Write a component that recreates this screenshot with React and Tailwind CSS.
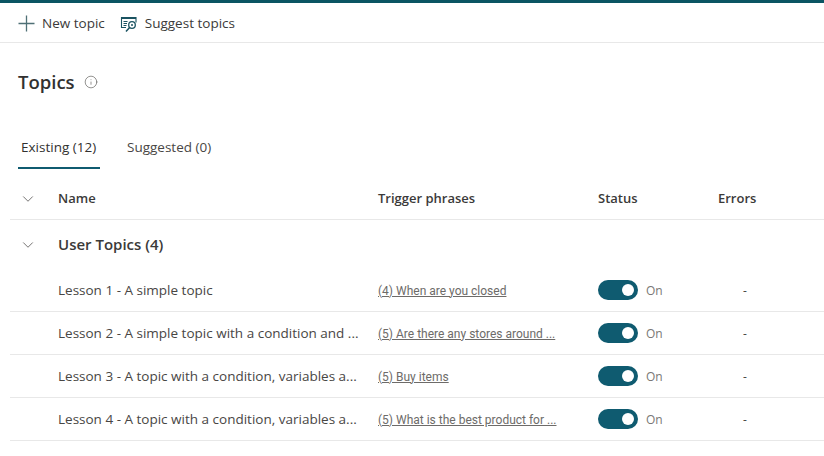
import { ChevronDown, Info } from "lucide-react";

const rows = [
  { name: "Lesson 1 - A simple topic", phrase: "(4) When are you closed" },
  { name: "Lesson 2 - A simple topic with a condition and ...", phrase: "(5) Are there any stores around ..." },
  { name: "Lesson 3 - A topic with a condition, variables a...", phrase: "(5) Buy items" },
  { name: "Lesson 4 - A topic with a condition, variables a...", phrase: "(5) What is the best product for ..." },
];

const PlusIcon = () => (
  <svg width="17" height="17" viewBox="0 0 17 17" fill="none" stroke="#4f7076" strokeWidth="1.3">
    <path d="M8.5 0.5v16M0.5 8.5h16" />
  </svg>
);

const SuggestIcon = () => (
  <svg width="18" height="18" viewBox="0 0 18 18" fill="none" stroke="#1a5361" strokeWidth="1.1">
    <path d="M6 12.500h-4.500v-10h14.500v5" />
    <path d="M1.500 3h14.500" strokeWidth="2" />
    <path d="M3.500 6.500h4M3.500 8.500h3.500M3.500 10.500h3" />
    <circle cx="12" cy="10" r="3.300" strokeWidth="1.300" />
    <circle cx="12" cy="10" r="1" fill="#1a5361" stroke="none" />
    <path d="M9.600 12.500l-3.600 4" strokeWidth="1.500" />
  </svg>
);

const Toggle = () => (
  <div className="flex items-center gap-2">
    <div className="w-10 h-5 rounded-full bg-[#0f5b70] flex items-center justify-end pr-[4px]">
      <div className="w-3 h-3 rounded-full bg-white" />
    </div>
    <span className="text-xs text-[#797775] pt-[1px]">On</span>
  </div>
);

export default function App() {
  return (
    <div className="w-[824px] h-[456px] bg-white overflow-hidden text-[#323130] font-['Open_Sans',sans-serif]">
      <div className="h-[3px] bg-[#0b5563]" />

      <div className="h-[40px] border-b border-[#e8e8e8] flex items-center pl-[18px] pt-[2px] text-[13.5px] text-[#3b3a39]">
        <PlusIcon />
        <span className="ml-[7px]">New topic</span>
        <span className="ml-[15px]"><SuggestIcon /></span>
        <span className="ml-[7px]">Suggest topics</span>
      </div>

      <div className="flex items-center pl-[18px] mt-[24px] h-[30px]">
        <h1 className="text-[18.5px] font-semibold">Topics</h1>
        <Info size={14} strokeWidth={1} className="ml-[9px] text-[#484644]" />
      </div>

      <div className="flex mt-[37px] pl-[18px] text-[13.5px] h-[35px]">
        <div className="w-[82px] pl-[3px] pt-[3px] border-b-2 border-[#0f5b70] font-medium">Existing (12)</div>
        <div className="ml-[27px] pt-[3px] text-[#484644]">Suggested (0)</div>
      </div>

      <div className="ml-[10px]">
        <div className="grid grid-cols-[48px_320px_220px_120px_1fr] items-center h-[51px] pt-[9px] border-b border-[#e8e8e8] text-[13px] font-semibold text-[#3b3a39]">
          <ChevronDown size={18} strokeWidth={1} className="ml-[9px] text-[#484644]" />
          <span>Name</span>
          <span>Trigger phrases</span>
          <span>Status</span>
          <span>Errors</span>
        </div>

        <div className="grid grid-cols-[48px_1fr] items-center h-[49px] text-[15px] font-semibold text-[#3b3a39]">
          <ChevronDown size={18} strokeWidth={1} className="ml-[9px] text-[#484644]" />
          <span>User Topics (4)</span>
        </div>

        {rows.map((r) => (
          <div key={r.name} className="grid grid-cols-[48px_320px_220px_120px_1fr] items-center h-[43px] border-b border-[#e8e8e8] text-[13.5px] text-[#484644]">
            <span />
            <span className="whitespace-nowrap">{r.name}</span>
            <span className="font-['Roboto',sans-serif] text-xs pt-[1px] text-[#6d6b69] underline whitespace-nowrap">{r.phrase}</span>
            <Toggle />
            <span className="pl-[25px] pt-[1px] text-xs">-</span>
          </div>
        ))}
      </div>
    </div>
  );
}
